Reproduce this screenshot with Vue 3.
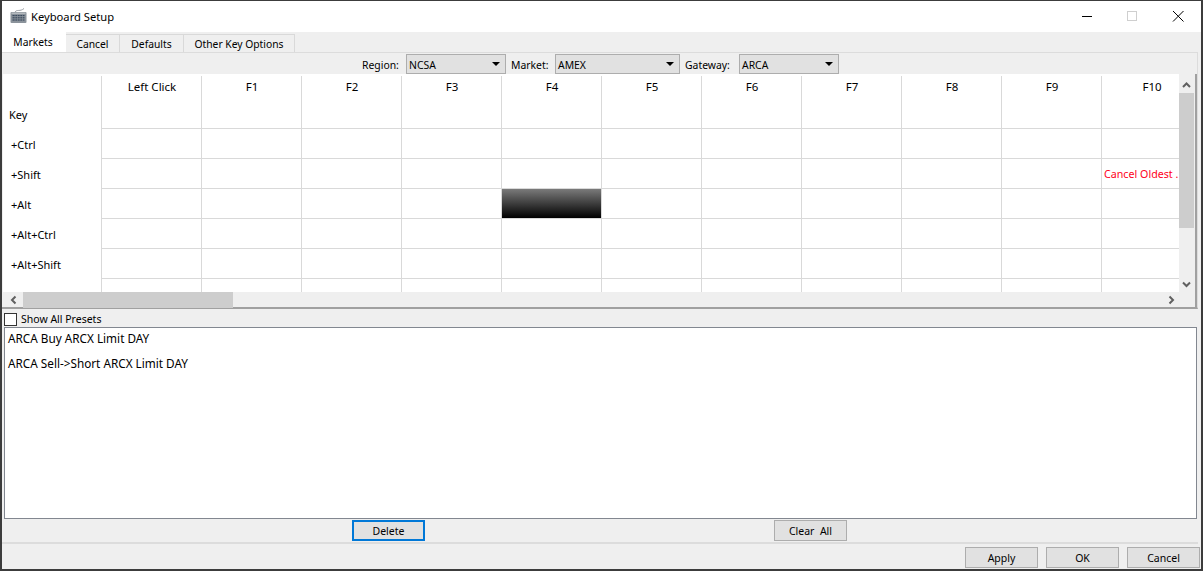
<script setup>
const cols = ['Left Click','F1','F2','F3','F4','F5','F6','F7','F8','F9','F10'];
const rows = [
  { label: '+Ctrl' },
  { label: '+Shift', cells: { F10: 'Cancel Oldest .' } },
  { label: '+Alt', dark: 'F4' },
  { label: '+Alt+Ctrl' },
  { label: '+Alt+Shift' },
  { label: '+Ctrl+Shift' },
];
</script>

<template>
  <div class="window">
    <div class="titlebar">
      <svg class="appicon" width="17" height="17" viewBox="0 0 17 17">
        <path d="M5 5 C7 2 10 5 14 1.500" fill="none" stroke="#9a9ea3" stroke-width="1"/>
        <rect x="0.500" y="5" width="16" height="11" rx="1" fill="#8b939b"/>
        <rect x="1.500" y="5.500" width="14" height="1.500" fill="#b4b9be"/>
        <g fill="#3b4a5e">
          <rect x="2.500" y="8" width="12" height="1.200"/>
          <rect x="2.500" y="10.200" width="12" height="1.200"/>
          <rect x="2.500" y="12.400" width="12" height="1.200"/>
        </g>
        <path d="M5 8V14M7.500 8V14M10 8V14M12.500 8V14" stroke="#8b939b" stroke-width="0.600"/>
      </svg>
      <span class="title">Keyboard Setup</span>
      <div class="winctl">
        <svg width="46" height="31" viewBox="0 0 46 31"><path d="M19 15.500H29" stroke="#000"/></svg>
        <svg width="46" height="31" viewBox="0 0 46 31"><rect x="18.500" y="10.500" width="9" height="9" fill="none" stroke="#cfcfcf"/></svg>
        <svg width="46" height="31" viewBox="0 0 46 31"><path d="M18 10L28.500 20.500M28.500 10L18 20.500" stroke="#000" fill="none"/></svg>
      </div>
    </div>

    <div class="tabs">
      <div class="tab active">Markets</div>
      <div class="tab w1">Cancel</div>
      <div class="tab w2">Defaults</div>
      <div class="tab w3">Other Key Options</div>
    </div>

    <div class="pane">
      <div class="filters">
        <label class="l1">Region:</label>
        <div class="combo c1"><span>NCSA</span><i></i></div>
        <label class="l1">Market:</label>
        <div class="combo c2"><span>AMEX</span><i></i></div>
        <label class="l2">Gateway:</label>
        <div class="combo c3"><span>ARCA</span><i></i></div>
      </div>

      <div class="tablewrap">
        <div class="viewport">
          <div class="grid">
            <div class="hrow">
              <div class="rowhead"></div>
              <div v-for="c in cols" :key="c" class="hcell">{{ c }}</div>
            </div>
            <div class="row keyrow">
              <div class="rowhead">Key</div>
              <div v-for="c in cols" :key="c" class="cell"></div>
            </div>
            <div v-for="r in rows" :key="r.label" class="row">
              <div class="rowhead ind">{{ r.label }}</div>
              <div v-for="c in cols" :key="c" class="cell" :class="{ dark: r.dark === c }">
                <span v-if="r.cells && r.cells[c]" class="red">{{ r.cells[c] }}</span>
              </div>
            </div>
          </div>
        </div>
        <div class="vbar">
          <svg class="arrow" width="15" height="19" viewBox="0 0 15 19"><path d="M4 13L7.500 9.500L11 13" fill="none" stroke="#606060" stroke-width="2"/></svg>
          <div class="vtrack"><div class="vthumb"></div></div>
          <svg class="arrow" width="15" height="16" viewBox="0 0 15 16"><path d="M4 6.500L7.500 10L11 6.500" fill="none" stroke="#606060" stroke-width="2"/></svg>
        </div>
        <div class="hbar">
          <svg class="arrow" width="16" height="16" viewBox="0 0 16 16"><path d="M9.500 4.500L6 8L9.500 11.500" fill="none" stroke="#606060" stroke-width="2"/></svg>
          <div class="htrack"><div class="hthumb"></div></div>
          <svg class="arrow" width="16" height="16" viewBox="0 0 16 16"><path d="M6.500 4.500L10 8L6.500 11.500" fill="none" stroke="#606060" stroke-width="2"/></svg>
        </div>
      </div>
    </div>

    <div class="checkrow">
      <span class="check"></span>
      <span>Show All Presets</span>
    </div>

    <div class="list">
      <div class="item">ARCA Buy ARCX Limit DAY</div>
      <div class="item">ARCA Sell-&gt;Short ARCX Limit DAY</div>
    </div>

    <div class="actions">
      <button class="btn focus">Delete</button>
      <button class="btn clear">Clear&nbsp;&nbsp;All</button>
    </div>

    <div class="footer">
      <button class="btn foot">Apply</button>
      <button class="btn foot">OK</button>
      <button class="btn foot">Cancel</button>
    </div>
  </div>
</template>

<style scoped>
.window {
  width: 1203px;
  height: 571px;
  box-sizing: border-box;
  border: 1px solid #3c3c3c;
  border-left-width: 2px;
  border-right-width: 2px;
  border-bottom-width: 2px;
  background: #efefef;
  display: flex;
  flex-direction: column;
  font-family: "Noto Sans", "Open Sans", sans-serif;
  font-size: 11px;
  color: #000;
  overflow: hidden;
}
.titlebar {
  height: 31px;
  flex: none;
  background: #fff;
  display: flex;
  align-items: center;
  padding-left: 8px;
}
.appicon { margin-right: 4px; margin-bottom: 2px; }
.title { font-size: 11.200px; }
.winctl { margin-left: auto; display: flex; }
.winctl svg { display: block; }
.tabs {
  height: 20px;
  flex: none;
  display: flex;
  align-items: flex-end;
  font-size: 10.300px;
}
.tab {
  height: 18px;
  box-sizing: border-box;
  border: 1px solid #d9d9d9;
  border-bottom: none;
  border-left: none;
  display: flex;
  align-items: center;
  justify-content: center;
}
.tab.active { width: 64px; height: 20px; background: #fff; border: none; padding-right: 2px; box-sizing: border-box; }
.w1 { width: 54px; }
.w2 { width: 64px; }
.w3 { width: 111px; }
.pane {
  flex: none;
  height: 257px;
  box-sizing: border-box;
  border-top: 1px solid #dcdcdc;
  border-right: 1px solid #dcdcdc;
  border-bottom: 2px solid #a0a0a0;
  margin-right: 3px;
  padding-left: 1px;
  display: flex;
  flex-direction: column;
}
.filters {
  height: 21px;
  flex: none;
  display: flex;
  align-items: center;
  padding-left: 359px;
  font-size: 10.400px;
}
.filters label { padding-top: 2px; flex: none; }
.l1 { width: 44px; }
.l2 { width: 54px; }
.combo {
  height: 20px;
  box-sizing: border-box;
  border: 1px solid #adadad;
  background: #e1e1e1;
  display: flex;
  align-items: center;
  padding: 0 5px 0 2px;
  margin-right: 5px;
  flex: none;
}
.combo span { flex: 1; padding-top: 2px; }
.combo i {
  width: 0;
  height: 0;
  border-left: 4px solid transparent;
  border-right: 4px solid transparent;
  border-top: 4px solid #000;
}
.c1 { width: 100px; }
.c2 { width: 125px; }
.c3 { width: 100px; }
.tablewrap {
  flex: 1;
  min-height: 0;
  display: grid;
  grid-template-columns: 1176px 15px;
  grid-template-rows: 218px 16px;
  border-right: 2px solid #a0a0a0;
}
.viewport { overflow: hidden; background: #fff; }
.grid { width: 1300px; }
.hrow, .row { display: flex; }
.hrow { height: 25px; padding-top: 2px; box-sizing: border-box; }
.row { height: 30px; }
.rowhead {
  width: 99px;
  flex: none;
  box-sizing: border-box;
  padding-left: 6px;
  display: flex;
  align-items: center;
  border-right: 1px solid #d9d9d9;
}
.rowhead.ind { padding-left: 8px; }
.keyrow .rowhead { padding-top: 1px; }
.row:last-child .rowhead { padding-top: 2px; }
.hcell {
  width: 100px;
  flex: none;
  box-sizing: border-box;
  display: flex;
  justify-content: center;
  align-items: flex-start;
  padding-top: 3px;
  padding-left: 1px;
  border-right: 1px solid #d9d9d9;
  font-size: 11.500px;
}
.cell {
  width: 100px;
  flex: none;
  box-sizing: border-box;
  border-right: 1px solid #d9d9d9;
  border-bottom: 1px solid #d9d9d9;
  display: flex;
  align-items: center;
  overflow: hidden;
  white-space: nowrap;
}
.cell.dark {
  background: linear-gradient(#7a7a7a, #000);
}
.red { color: #ff0022; padding-left: 2px; font-size: 10.700px; }
.vbar {
  grid-column: 2;
  grid-row: 1 / 3;
  display: flex;
  flex-direction: column;
  height: 218px;
}
.arrow { flex: none; display: block; }
.vtrack { flex: 1; min-height: 0; }
.vthumb { height: 135px; background: #cdcdcd; }
.hbar {
  grid-column: 1 / 3;
  grid-row: 2;
  display: flex;
  width: 1176px;
  padding-left: 3px;
  box-sizing: border-box;
}
.htrack { flex: 1; }
.hthumb { width: 210px; height: 100%; background: #cdcdcd; margin-left: 1px; }
.checkrow {
  height: 18px;
  flex: none;
  box-sizing: border-box;
  display: flex;
  align-items: center;
  padding-left: 2px;
  padding-top: 2px;
  gap: 4px;
  font-size: 10.500px;
}
.check {
  width: 11px;
  height: 11px;
  border: 1px solid #333;
  background: #fff;
  flex: none;
}
.list {
  flex: none;
  height: 192px;
  box-sizing: border-box;
  margin: 0 4px 0 2px;
  border: 1px solid #828790;
  background: #fff;
  padding: 1px 3px;
  font-size: 11.750px;
}
.item { height: 25px; line-height: 18px; }
.actions {
  height: 25px;
  flex: none;
  box-sizing: border-box;
  border-bottom: 2px solid #dcdcdc;
  margin-right: 3px;
  display: flex;
  padding-left: 350px;
  padding-top: 1px;
}
.btn {
  font: inherit;
  font-size: 10.500px;
  color: #000;
  background: #e1e1e1;
  border: 1px solid #adadad;
  padding: 0;
  margin: 0;
  box-sizing: border-box;
  height: 21px;
}
.focus { width: 73px; border: 2px solid #0078d7; }
.clear { width: 73px; margin-left: 349px; }
.footer {
  flex: 1;
  display: flex;
  justify-content: flex-end;
  gap: 8px;
  padding-top: 3px;
  padding-right: 1px;
}
.foot { width: 73px; }
</style>
